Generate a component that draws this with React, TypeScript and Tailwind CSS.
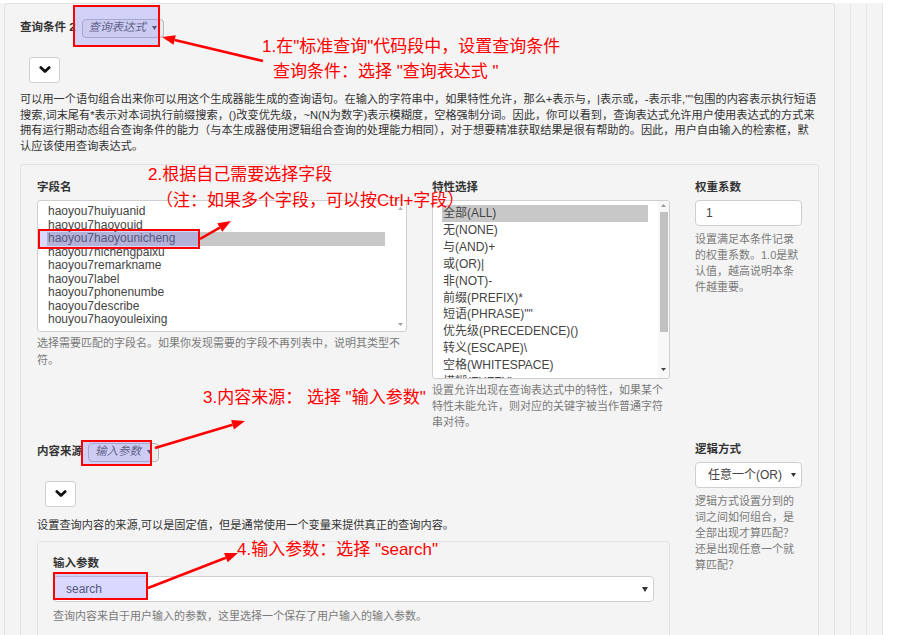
import React from "react";

function Tri({ down = true, color = "#333", w = 6, h = 4 }: { down?: boolean; color?: string; w?: number; h?: number }) {
  return (
    <svg width={w} height={h} viewBox={`0 0 ${w} ${h}`} className="block">
      {down ? (
        <polygon points={`0,0 ${w},0 ${w / 2},${h}`} fill={color} />
      ) : (
        <polygon points={`0,${h} ${w},${h} ${w / 2},0`} fill={color} />
      )}
    </svg>
  );
}

function Chevron() {
  return (
    <svg width="12" height="8" viewBox="0 0 12 8" className="block">
      <polyline points="1.8,1.6 6,5.6 10.2,1.6" fill="none" stroke="#111" strokeWidth="2.8" strokeLinecap="round" strokeLinejoin="round" />
    </svg>
  );
}

function ChevBtn({ ml }: { ml: string }) {
  return (
    <div className={`${ml} w-[31px] h-[26px] bg-white border border-[#d0d0d0] rounded-[3px] flex items-center justify-center`}>
      <Chevron />
    </div>
  );
}

function Badge({ text }: { text: string }) {
  return (
    <div className="h-[19px] px-[6px] flex items-center gap-[6px] border border-[#b8b8b8] rounded-[4px] bg-[#ececec] text-[#555] italic text-[11.5px]">
      <span>{text}</span>
      <Tri w={5} h={4} color="#444" />
    </div>
  );
}

function Arrow({ x1, y1, x2, y2 }: { x1: number; y1: number; x2: number; y2: number }) {
  const a = Math.atan2(y2 - y1, x2 - x1);
  const L = 13;
  const W = 5;
  const bx = x2 - L * Math.cos(a);
  const by = y2 - L * Math.sin(a);
  const px = -Math.sin(a) * W;
  const py = Math.cos(a) * W;
  return (
    <g>
      <line x1={x1} y1={y1} x2={bx} y2={by} stroke="#f00" strokeWidth="2.6" />
      <polygon points={`${x2},${y2} ${bx + px},${by + py} ${bx - px},${by - py}`} fill="#f00" />
    </g>
  );
}

const fields = [
  "haoyou7huiyuanid",
  "haoyou7haoyouid",
  "haoyou7haoyounicheng",
  "haoyou7nichengpaixu",
  "haoyou7remarkname",
  "haoyou7label",
  "haoyou7phonenumbe",
  "haoyou7describe",
  "houyou7haoyouleixing",
];

const features = [
  "全部(ALL)",
  "无(NONE)",
  "与(AND)+",
  "或(OR)|",
  "非(NOT)-",
  "前缀(PREFIX)*",
  "短语(PHRASE)\"\"",
  "优先级(PRECEDENCE)()",
  "转义(ESCAPE)\\",
  "空格(WHITESPACE)",
  "模糊(FUZZY)~",
];

export default function App() {
  return (
    <div className="relative w-[900px] h-[635px] overflow-hidden bg-white text-[#333] [font-family:'Liberation_Sans','Noto_Sans_CJK_SC',sans-serif]">
      <div className="w-[883px] h-full bg-[#f4f4f4] border-r border-[#e6e6e6] pl-[4px] pr-[15px]">
        <div className="h-full border-r border-[#e6e6e6] pr-[15px]">
          <div className="h-full border-r border-[#e6e6e6] pr-[15px]">
            {/* outer panel */}
            <div className="mt-[3px] h-[700px] border border-[#e3e3e3] rounded-[3px] bg-[#f4f4f4] px-[15px] pt-[14px]">
              <div className="flex items-center h-[20px]">
                <span className="font-bold text-[11.5px]">查询条件 2</span>
                <div className="ml-[6px]">
                  <Badge text="查询表达式" />
                </div>
              </div>
              <div className="mt-[19px]">
                <ChevBtn ml="ml-[9px]" />
              </div>
              <p className="mt-[9px] text-[11.2px] leading-[15.5px] whitespace-nowrap text-[#333]">
                可以用一个语句组合出来你可以用这个生成器能生成的查询语句。在输入的字符串中，如果特性允许，那么+表示与，|表示或，-表示非,""包围的内容表示执行短语
                <br />
                搜索,词末尾有*表示对本词执行前缀搜索，()改变优先级，~N(N为数字)表示模糊度，空格强制分词。因此，你可以看到，查询表达式允许用户使用表达式的方式来
                <br />
                拥有运行期动态组合查询条件的能力（与本生成器使用逻辑组合查询的处理能力相同），对于想要精准获取结果是很有帮助的。因此，用户自由输入的检索框，默
                <br />
                认应该使用查询表达式。
              </p>

              {/* well */}
              <div className="mt-[10px] h-[600px] border border-[#e3e3e3] rounded-[3px] px-[16px] pt-[14px]">
                <div className="grid grid-cols-[370px_238px_107px] gap-x-[25px] gap-y-[11px]">
                  {/* field names */}
                  <div>
                    <div className="font-bold text-[11.5px] leading-[16px] mb-[5px]">字段名</div>
                    <div className="h-[132px] bg-white border border-[#cfcfcf] rounded-[3px] flex">
                      <div className="flex-1 pl-[9px] pr-[10px] pt-[4px] overflow-hidden">
                        {fields.map((f, i) => (
                          <div
                            key={f}
                            className={`pl-[1px] text-[12px] leading-[13.5px] text-[#444] ${i === 2 ? "bg-[#c8c8c8]" : ""}`}
                          >
                            {f}
                          </div>
                        ))}
                      </div>
                      <div className="w-[11px] flex flex-col items-center justify-between pt-[6px] pb-[5px]">
                        <Tri down={false} w={5} h={3} color="#b0b0b0" />
                        <Tri w={5} h={3} color="#a0a0a0" />
                      </div>
                    </div>
                    <div className="mt-[3px] text-[11px] leading-[17px] text-[#7a7a7a] whitespace-nowrap">
                      选择需要匹配的字段名。如果你发现需要的字段不再列表中，说明其类型不
                      <br />
                      符。
                    </div>
                  </div>

                  {/* features */}
                  <div>
                    <div className="font-bold text-[11.5px] leading-[16px] mb-[5px]">特性选择</div>
                    <div className="h-[179px] bg-white border border-[#cfcfcf] rounded-[3px] flex overflow-hidden">
                      <div className="flex-1 pl-[9px] pr-[10px] pt-[4px] overflow-hidden">
                        {features.map((f, i) => (
                          <div
                            key={f}
                            className={`pl-[1px] text-[12px] leading-[16.9px] text-[#444] whitespace-nowrap ${i === 0 ? "bg-[#c8c8c8]" : ""}`}
                          >
                            {f}
                          </div>
                        ))}
                      </div>
                      <div className="w-[11px] bg-[#f7f7f7] flex flex-col items-center pt-[3px]">
                        <Tri down={false} w={5} h={3} color="#9a9a9a" />
                        <div className="mt-[5px] w-[8px] h-[120px] bg-[#c1c1c1]" />
                        <div className="mt-[36px]">
                          <Tri w={5} h={3} color="#404040" />
                        </div>
                      </div>
                    </div>
                    <div className="mt-[3px] text-[11px] leading-[16px] text-[#7a7a7a] whitespace-nowrap">
                      设置允许出现在查询表达式中的特性，如果某个
                      <br />
                      特性未能允许，则对应的关键字被当作普通字符
                      <br />
                      串对待。
                    </div>
                  </div>

                  {/* weight */}
                  <div>
                    <div className="font-bold text-[11.5px] leading-[16px] mb-[5px]">权重系数</div>
                    <div className="h-[26px] bg-white border border-[#cfcfcf] rounded-[4px] flex items-center pl-[10px] text-[12px] text-[#444]">
                      1
                    </div>
                    <div className="mt-[5px] text-[11px] leading-[16px] text-[#7a7a7a] whitespace-nowrap">
                      设置满足本条件记录
                      <br />
                      的权重系数。1.0是默
                      <br />
                      认值，越高说明本条
                      <br />
                      件越重要。
                    </div>
                  </div>

                  {/* content source */}
                  <div className="col-span-2">
                    <div className="flex items-center h-[20px] mt-[1px]">
                      <span className="font-bold text-[11.5px]">内容来源</span>
                      <div className="ml-[5px]">
                        <Badge text="输入参数" />
                      </div>
                    </div>
                    <div className="mt-[19px]">
                      <ChevBtn ml="ml-[8px]" />
                    </div>
                    <div className="mt-[10px] text-[11.2px] leading-[16px] text-[#333] whitespace-nowrap">
                      设置查询内容的来源,可以是固定值，但是通常使用一个变量来提供真正的查询内容。
                    </div>
                    <div className="mt-[8px] h-[200px] border border-[#e3e3e3] rounded-[3px] pl-[15px] pr-[15px] pt-[13px]">
                      <div className="font-bold text-[11.5px] leading-[16px]">输入参数</div>
                      <div className="mt-[5px] h-[26px] bg-white border border-[#cfcfcf] rounded-[4px] flex items-center justify-between pl-[12px] pr-[5px] text-[12px] text-[#444]">
                        <span>search</span>
                        <Tri w={6} h={5} color="#333" />
                      </div>
                      <div className="mt-[6px] text-[11px] leading-[16px] text-[#7a7a7a] whitespace-nowrap">
                        查询内容来自于用户输入的参数，这里选择一个保存了用户输入的输入参数。
                      </div>
                    </div>
                  </div>

                  {/* logic */}
                  <div>
                    <div className="font-bold text-[11.5px] leading-[16px] mb-[5px]">逻辑方式</div>
                    <div className="h-[26px] bg-white border border-[#cfcfcf] rounded-[4px] flex items-center justify-between pl-[12px] pr-[5px] text-[12px] text-[#444]">
                      <span>任意一个(OR)</span>
                      <Tri w={5} h={4} color="#333" />
                    </div>
                    <div className="mt-[5px] text-[11px] leading-[16px] text-[#7a7a7a] whitespace-nowrap">
                      逻辑方式设置分到的
                      <br />
                      词之间如何组合，是
                      <br />
                      全部出现才算匹配？
                      <br />
                      还是出现任意一个就
                      <br />
                      算匹配？
                    </div>
                  </div>
                </div>
              </div>
            </div>
          </div>
        </div>
      </div>

      {/* annotation boxes */}
      <div className="absolute left-[73px] top-[5px] w-[87px] h-[42px] border-[2.5px] border-[#f00] bg-[#8080ff]/30" />
      <div className="absolute left-[38px] top-[229px] w-[162px] h-[20px] border-[2.5px] border-[#f00] bg-[#8080ff]/30" />
      <div className="absolute left-[81px] top-[440px] w-[71px] h-[26px] border-[2.5px] border-[#f00] bg-[#8080ff]/30" />
      <div className="absolute left-[53px] top-[572px] w-[95px] h-[28px] border-[2.5px] border-[#f00] bg-[#8080ff]/30" />

      {/* annotation texts */}
      <div className="absolute left-[262px] top-[35px] text-[17px] leading-[23px] text-[#f00] whitespace-nowrap">
        1.在"标准查询"代码段中，设置查询条件
      </div>
      <div className="absolute left-[273px] top-[60px] text-[17px] leading-[23px] text-[#f00] whitespace-nowrap">
        查询条件：选择 "查询表达式 "
      </div>
      <div className="absolute left-[148px] top-[163px] text-[17px] leading-[23px] text-[#f00] whitespace-nowrap">
        2.根据自己需要选择字段
      </div>
      <div className="absolute left-[156px] top-[189px] text-[17px] leading-[23px] text-[#f00] whitespace-nowrap">
        （注：如果多个字段，可以按Ctrl+字段）
      </div>
      <div className="absolute left-[203px] top-[386px] text-[17px] leading-[23px] text-[#f00] whitespace-nowrap">
        3.内容来源： 选择 "输入参数"
      </div>
      <div className="absolute left-[237px] top-[538px] text-[17px] leading-[23px] text-[#f00] whitespace-nowrap">
        4.输入参数：选择 "search"
      </div>

      {/* arrows */}
      <svg className="absolute left-0 top-0 pointer-events-none" width="900" height="635">
        <Arrow x1={263} y1={61} x2={162} y2={37} />
        <Arrow x1={200} y1={239} x2={231} y2={221} />
        <Arrow x1={155} y1={448} x2={245} y2={421} />
        <Arrow x1={148} y1={588} x2={238} y2={553} />
      </svg>
    </div>
  );
}
